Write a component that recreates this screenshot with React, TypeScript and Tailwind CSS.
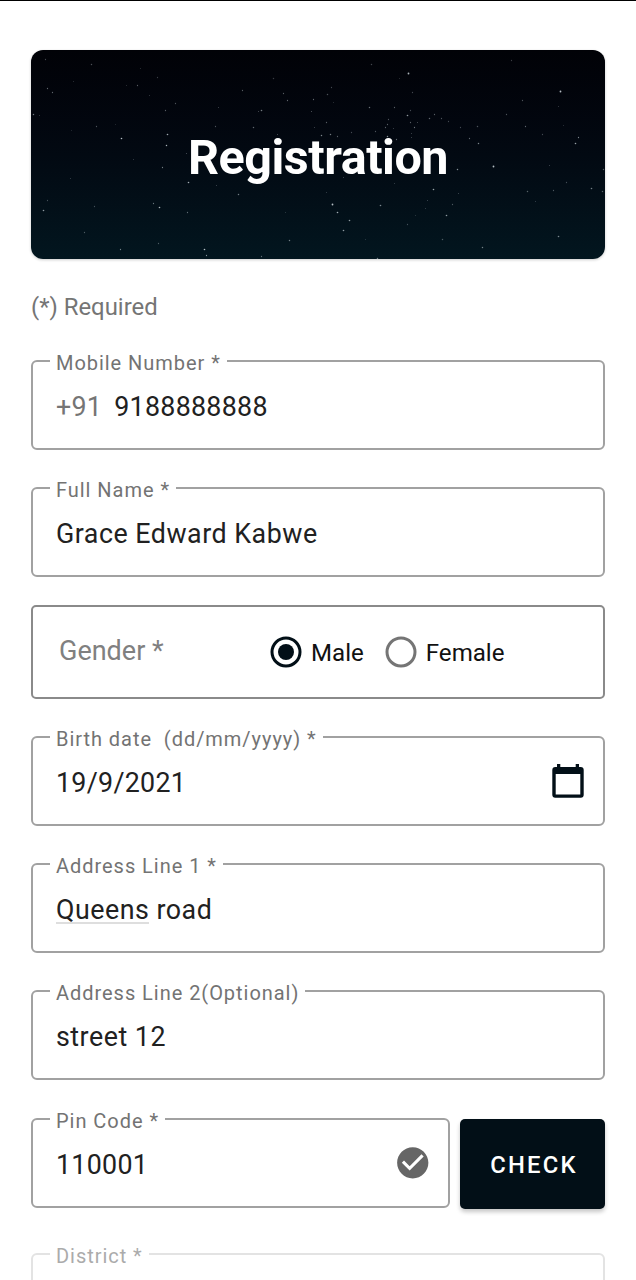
import type { ReactNode } from "react";

// x, y, radius, opacity of every star, in the banner's own 574x209 space
const stars: [number, number, number, number][] = [
  [14, 9, 0.7, 0.35], [60, 14, 0.8, 0.4], [109, 18, 0.6, 0.25], [126, 27, 0.7, 0.3], [42, 31, 0.6, 0.25],
  [16, 38, 0.7, 0.5], [21, 42, 0.7, 0.5], [106, 35, 0.7, 0.45], [95, 35, 0.6, 0.25], [118, 45, 0.6, 0.3],
  [144, 53, 0.7, 0.4], [134, 60, 0.7, 0.45], [2, 64, 0.8, 0.6], [8, 65, 0.6, 0.3], [65, 76, 0.7, 0.4],
  [90, 88, 0.9, 0.95], [136, 84, 0.9, 0.85], [135, 95, 0.8, 0.9], [131, 117, 0.7, 0.6], [102, 109, 0.6, 0.3],
  [155, 103, 0.6, 0.4], [157, 132, 0.9, 0.85], [39, 128, 0.6, 0.3], [16, 150, 0.7, 0.35], [12, 160, 0.9, 0.75],
  [63, 156, 0.7, 0.35], [122, 153, 0.7, 0.55], [128, 157, 0.9, 0.9], [156, 162, 0.7, 0.5], [53, 182, 0.7, 0.4],
  [89, 199, 0.7, 0.6], [127, 193, 0.7, 0.4], [173, 199, 0.9, 0.95], [175, 205, 0.7, 0.7], [230, 206, 0.7, 0.5],
  [258, 190, 0.8, 0.6], [207, 144, 0.8, 0.6], [185, 135, 0.6, 0.35], [242, 28, 0.8, 0.3], [211, 40, 0.7, 0.45],
  [252, 43, 0.7, 0.45], [256, 50, 0.7, 0.5], [282, 49, 0.7, 0.5], [187, 57, 0.6, 0.35], [227, 61, 0.6, 0.4],
  [230, 60, 0.9, 0.6], [280, 61, 0.6, 0.45], [184, 76, 0.7, 0.4], [222, 77, 0.8, 0.5], [246, 84, 0.6, 0.4],
  [283, 77, 0.6, 0.35], [40, 80, 0.6, 0.2], [84, 74, 0.6, 0.2], [254, 162, 0.6, 0.25],
  [340, 14, 0.8, 0.35], [377, 23, 1, 0.9], [368, 28, 0.6, 0.25], [300, 37, 0.7, 0.35], [296, 44, 0.8, 0.4],
  [302, 52, 0.6, 0.25], [381, 42, 0.7, 0.35], [338, 57, 0.8, 0.55], [363, 57, 0.7, 0.45], [379, 60, 0.7, 0.35],
  [376, 65, 0.9, 0.75], [357, 69, 0.7, 0.4], [295, 72, 0.7, 0.45], [398, 68, 0.8, 0.5], [403, 64, 0.7, 0.45],
  [410, 68, 0.7, 0.4], [417, 71, 0.7, 0.35], [356, 74, 0.7, 0.45], [354, 77, 0.7, 0.45], [379, 72, 0.7, 0.45],
  [386, 72, 0.6, 0.4], [383, 77, 0.7, 0.55], [362, 78, 0.6, 0.35], [344, 81, 0.7, 0.4], [320, 82, 0.7, 0.35],
  [356, 86, 0.8, 0.7], [380, 83, 0.6, 0.35], [365, 89, 0.7, 0.5], [380, 87, 0.6, 0.35], [290, 85, 0.8, 0.65],
  [299, 84, 0.8, 0.6], [306, 86, 0.7, 0.45], [429, 77, 0.7, 0.35], [446, 76, 0.8, 0.4], [438, 88, 0.7, 0.5],
  [447, 93, 0.8, 0.65], [475, 64, 0.7, 0.4], [491, 50, 0.7, 0.4], [527, 56, 0.6, 0.3], [529, 41, 1, 0.95],
  [480, 10, 0.7, 0.3], [494, 76, 0.7, 0.5], [511, 84, 0.7, 0.35], [532, 75, 0.6, 0.25], [547, 87, 0.7, 0.65],
  [544, 93, 0.9, 0.8], [462, 116, 1, 0.95], [426, 119, 0.8, 0.7], [518, 115, 0.6, 0.35], [572, 119, 0.8, 0.45],
  [312, 127, 0.6, 0.35], [402, 139, 0.9, 0.8], [427, 143, 0.6, 0.35], [496, 141, 0.8, 0.45], [522, 140, 0.7, 0.4],
  [535, 132, 0.7, 0.35], [560, 138, 0.9, 0.6], [571, 141, 0.8, 0.45], [504, 151, 0.6, 0.3], [396, 150, 0.6, 0.35],
  [421, 154, 0.7, 0.4], [301, 154, 1, 0.95], [306, 162, 0.9, 0.85], [318, 170, 0.9, 0.75], [312, 180, 0.9, 0.75],
  [349, 155, 0.9, 0.65], [394, 158, 0.6, 0.3], [415, 165, 0.9, 0.75], [384, 165, 0.6, 0.25], [376, 174, 0.7, 0.35],
  [411, 189, 0.8, 0.4], [527, 186, 0.9, 0.65], [451, 197, 0.8, 0.6], [334, 189, 0.6, 0.25], [346, 208, 0.8, 0.6],
  [363, 133, 0.6, 0.3], [295, 142, 0.6, 0.3],
];

function Banner() {
  return (
    <header className="relative mt-[50px] flex h-[209px] items-center justify-center overflow-hidden rounded-[12px] bg-linear-to-b from-[#010207] via-[#020912] to-[#02161f] shadow-[0_1px_3px_rgba(0,0,0,0.2)]">
      <svg className="absolute inset-0 h-full w-full" viewBox="0 0 574 209" aria-hidden="true">
        {stars.map(([x, y, r, o], i) => (
          <circle key={i} cx={x + 0.5} cy={y + 0.5} r={r * 0.9} fill="#dfe9ee" opacity={o * 0.85} />
        ))}
      </svg>
      <h1 className="relative pt-[7px] text-[48.5px] leading-none font-bold tracking-[-0.01em] text-white">Registration</h1>
    </header>
  );
}

type FieldProps = {
  label: string;
  value?: ReactNode;
  icon?: ReactNode;
  className?: string;
  numeric?: boolean;
  disabled?: boolean;
};

function Field({ label, value, icon, className = "", numeric = false, disabled = false }: FieldProps) {
  return (
    <div
      className={`relative flex h-[90px] shrink-0 items-center justify-between rounded-[6px] border-2 pr-[19px] pl-[23px] ${
        disabled ? "border-[#e3e3e3]" : "border-[#a1a1a1]"
      } ${className}`}
    >
      <span
        className={`absolute -top-[11px] left-[17px] bg-white pr-[6px] pl-[6px] text-[20px] leading-[25px] tracking-[0.048em] whitespace-pre ${
          disabled ? "text-[#ababab]" : "text-[#737373]"
        }`}
      >
        {label}
      </span>
      <span
        className={`pt-[3px] text-[26.8px] leading-[32px] whitespace-pre text-[#212121] ${
          numeric ? "tracking-[0.011em]" : "tracking-[0.019em]"
        }`}
      >
        {value}
      </span>
      {icon}
    </div>
  );
}

function CalendarIcon() {
  return (
    <svg className="h-[34px] w-[32px]" viewBox="0 0 32 34" fill="#020f17" aria-hidden="true">
      <path
        fillRule="evenodd"
        d="M5 0h3.3v3h15.4V0H27v3h1.7a3 3 0 0 1 3 3v24.7a3 3 0 0 1-3 3H3.3a3 3 0 0 1-3-3V6a3 3 0 0 1 3-3H5zM3.7 10v20.4h24.6V10z"
      />
    </svg>
  );
}

function CheckCircleIcon() {
  return (
    <svg className="-mr-[2.5px] h-[37.5px] w-[37.5px]" viewBox="0 0 24 24" fill="#666666" aria-hidden="true">
      <path d="M12 2C6.48 2 2 6.48 2 12s4.48 10 10 10 10-4.48 10-10S17.52 2 12 2zm-2 15l-5-5 1.41-1.41L10 14.17l7.59-7.59L19 8l-9 9z" />
    </svg>
  );
}

function Radio({ label, checked = false }: { label: string; checked?: boolean }) {
  return (
    <label className="flex items-center gap-[9px]">
      <svg className="h-[32px] w-[32px]" viewBox="0 0 32 32" fill="none" aria-hidden="true">
        <circle cx="16" cy="16" r="14" stroke={checked ? "#020f17" : "#757575"} strokeWidth="3" />
        {checked && <circle cx="16" cy="16" r="8" fill="#020f17" />}
      </svg>
      <span className="pt-[2px] text-[24.1px] leading-[28px] text-[#111111]">{label}</span>
    </label>
  );
}

export default function App() {
  return (
    <main className="flex h-[1280px] w-[636px] flex-col overflow-hidden border-t border-black bg-white px-[31px] font-['Roboto',sans-serif]">
      <div className="-mt-px flex flex-col">
        <Banner />
        <p className="mt-[34px] h-[28px] text-[23.9px] leading-[28px] text-[#757575]">(*) Required</p>

        <Field
          className="mt-[39px]"
          label="Mobile Number *"
          numeric
          value={
            <>
              <span className="mr-[12px] text-[#757575]">+91</span>9188888888
            </>
          }
        />
        <Field className="mt-[37px]" label="Full Name *" value="Grace Edward Kabwe" />

        <div className="mt-[28px] flex h-[94px] items-center rounded-[5px] border-2 border-[#8a8a8a] pl-[26px]">
          <span className="-mt-[2px] w-[211px] text-[27px] leading-[32px] text-[#808080]">Gender *</span>
          <div className="flex gap-[21px]">
            <Radio label="Male" checked />
            <Radio label="Female" />
          </div>
        </div>

        <Field
          className="mt-[37px]"
          label="Birth date  (dd/mm/yyyy) *"
          numeric
          value="19/9/2021"
          icon={<CalendarIcon />}
        />
        <Field
          className="mt-[37px]"
          label="Address Line 1 *"
          value={
            <>
              <span className="inline-block h-[30px] border-b-2 border-[#dedede] leading-[32px]">Queens</span> road
            </>
          }
        />
        <Field className="mt-[37px]" label="Address Line 2(Optional)" value="street 12" />

        <div className="mt-[38px] flex gap-[10px]">
          <Field className="w-[419px]" label="Pin Code *" numeric value="110001" icon={<CheckCircleIcon />} />
          <button
            type="button"
            className="mt-px h-[90px] flex-1 rounded-[5px] bg-[#020f17] pt-[3px] pl-[3px] text-[23.8px] font-medium tracking-[0.095em] text-white shadow-[0_3px_4px_rgba(0,0,0,0.22)]"
          >
            CHECK
          </button>
        </div>

        <Field className="mt-[44px]" label="District *" disabled />
      </div>
    </main>
  );
}
